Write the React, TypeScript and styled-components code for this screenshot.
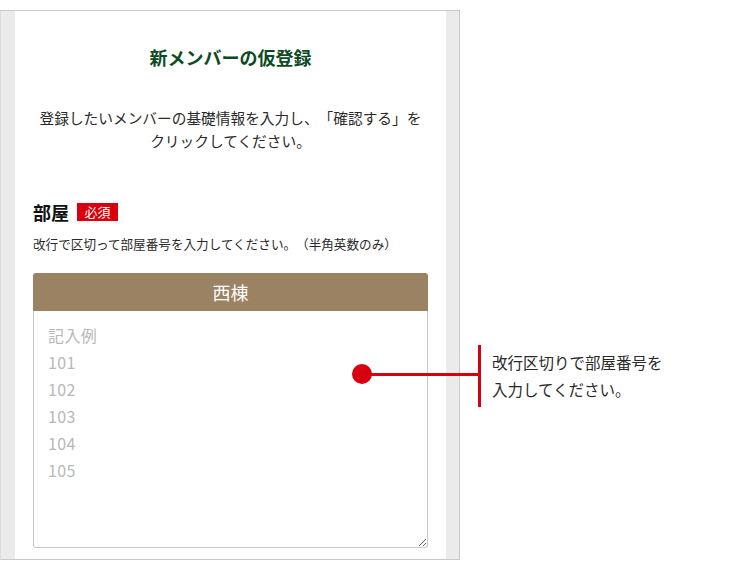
import React from 'react'
import styled, { createGlobalStyle } from 'styled-components'

const GlobalStyle = createGlobalStyle`
    html, body {
        margin: 0;
        padding: 0;
        background: #ffffff;
    }
    body {
        font-family: "Noto Sans CJK JP", "Noto Sans", sans-serif;
        color: #222222;
        text-spacing-trim: space-all;
    }
`

const placeholder = ['記入例', '101', '102', '103', '104', '105'].join('\n')

const App: React.FC = () => {
    return (
        <Page>
            <GlobalStyle />
            <Frame>
                <Sheet>
                    <Title>新メンバーの仮登録</Title>
                    <Lead>
                        登録したいメンバーの基礎情報を入力し、「確認する」を
                        <br />
                        クリックしてください。
                    </Lead>
                    <FieldLabel>
                        部屋
                        <Required>必須</Required>
                    </FieldLabel>
                    <Hint>改行で区切って部屋番号を入力してください。（半角英数のみ）</Hint>
                    <RoomBox>
                        <RoomHeader>西棟</RoomHeader>
                        <RoomInput placeholder={placeholder} />
                    </RoomBox>
                </Sheet>
            </Frame>
            <Callout>
                <Dot />
                <Leader />
                <Bar />
                <CalloutText>
                    改行区切りで部屋番号を
                    <br />
                    入力してください。
                </CalloutText>
            </Callout>
        </Page>
    )
}

export default App

const Page = styled.div`
    position: relative;
    width: 750px;
    height: 570px;
    padding-top: 10px;
    box-sizing: border-box;
`

const Frame = styled.div`
    width: 460px;
    box-sizing: border-box;
    border: 1px solid #c9c9c9;
    border-left-color: #dcdcdc;
    background: #ebebeb;
    padding: 0 13px 0 14px;
`

const Sheet = styled.div`
    background: #ffffff;
    padding: 33px 18px 11px;
    display: flex;
    flex-direction: column;
`

const Title = styled.h1`
    margin: 0;
    font-size: 18px;
    line-height: 26px;
    font-weight: 700;
    color: #0c4b1f;
    text-align: center;
`

const Lead = styled.p`
    margin: 36px 0 0;
    font-size: 14.7px;
    line-height: 23px;
    text-align: center;
    color: #2a2a2a;
`

const FieldLabel = styled.div`
    margin-top: 47px;
    display: flex;
    align-items: center;
    gap: 8px;
    font-size: 18px;
    line-height: 26px;
    font-weight: 700;
    color: #111111;
`

const Required = styled.span`
    display: inline-flex;
    align-items: center;
    justify-content: center;
    width: 41px;
    height: 18px;
    background: #d9000d;
    color: #ffffff;
    font-size: 13px;
    font-weight: 400;
    line-height: 18px;
`

const Hint = styled.p`
    margin: 9px 0 0;
    font-size: 12.6px;
    line-height: 20px;
    color: #2a2a2a;
`

const RoomBox = styled.div`
    margin-top: 19px;
    display: flex;
    flex-direction: column;
`

const RoomHeader = styled.div`
    height: 38px;
    display: flex;
    align-items: center;
    justify-content: center;
    background: #9a8262;
    border-radius: 3px 3px 0 0;
    color: #ffffff;
    font-size: 18px;
`

const RoomInput = styled.textarea`
    display: block;
    box-sizing: border-box;
    width: 100%;
    height: 237px;
    margin: 0;
    padding: 11px 14px;
    border: 1px solid #c8c8c8;
    border-top: none;
    border-radius: 0 0 3px 3px;
    font-family: "Noto Sans CJK JP", "Noto Sans", sans-serif;
    font-size: 16px;
    line-height: 27px;
    letter-spacing: 0.4px;
    color: #333333;
    background: #ffffff;
    outline: none;
    overflow: hidden;

    &::placeholder {
        color: #b8b8b8;
    }
`

const Callout = styled.div`
    position: absolute;
    left: 352px;
    top: 345px;
    display: flex;
    align-items: center;
`

const Dot = styled.span`
    width: 20px;
    height: 20px;
    border-radius: 50%;
    background: #d7000f;
    margin-top: -4px;
`

const Leader = styled.span`
    width: 107px;
    height: 3px;
    margin-left: -1px;
    margin-top: -4px;
    background: #d7000f;
`

const Bar = styled.span`
    width: 3px;
    height: 62px;
    background: #d7000f;
`

const CalloutText = styled.p`
    margin: 0 0 0 11px;
    font-size: 15.5px;
    line-height: 27px;
    color: #2a2a2a;
    white-space: nowrap;
`
